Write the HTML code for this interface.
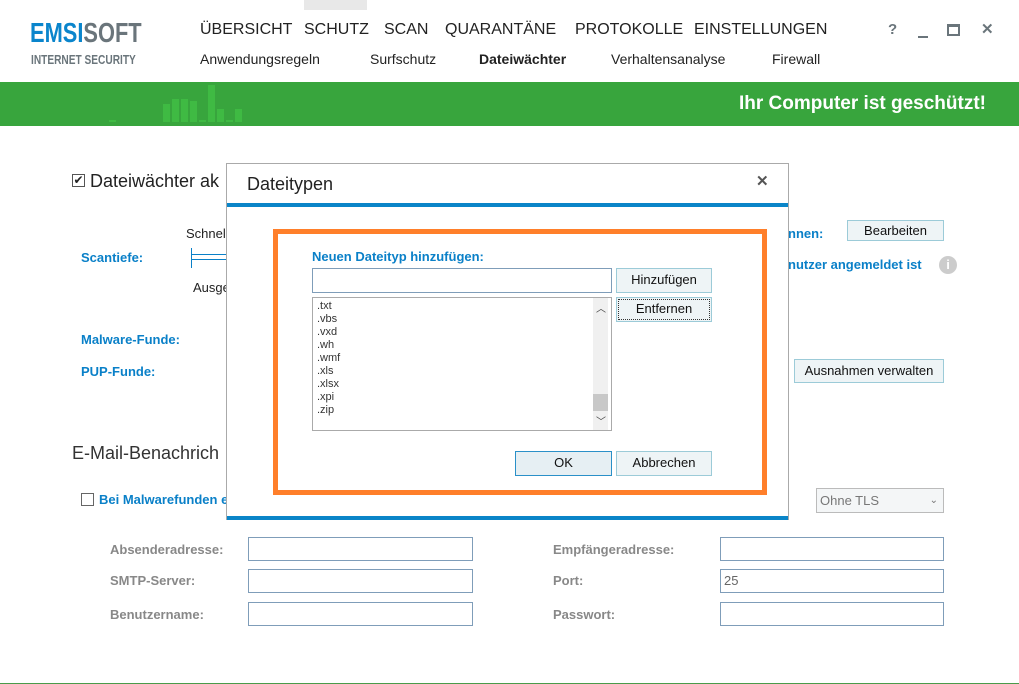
<!DOCTYPE html><html><head><meta charset="utf-8"><style>
*{margin:0;padding:0;box-sizing:border-box}
body{width:1019px;height:684px;position:relative;background:#fff;font-family:"Liberation Sans",sans-serif;color:#222;overflow:hidden}
.a{position:absolute;white-space:nowrap}
.nav{font-size:16px;color:#222;top:21px}
.sub{font-size:14px;color:#222;top:51px}
.blue{color:#0a80c8;font-weight:bold;font-size:13px}
.gray{color:#888;font-weight:bold;font-size:13px}
.in{position:absolute;border:1px solid #7f9db9;background:#fff;height:24px;width:225px}
.btn{position:absolute;border:1px solid #9ccbd8;background:#eef4f6;font-size:13px;text-align:center;line-height:22px;color:#111}
.bar{position:absolute;background:#3fba43;width:7px}
</style></head><body>
<div class="a" style="left:30px;top:17px;font-size:28px;font-weight:bold;color:#6a757b;transform:scaleX(0.78);transform-origin:left"><span style="color:#0a85cc">EMSI</span>SOFT</div>
<div class="a" style="left:31px;top:52px;font-size:13px;font-weight:bold;color:#6a757b;transform:scaleX(0.78);transform-origin:left">INTERNET SECURITY</div>
<div class="a" style="left:304px;top:0;width:63px;height:10px;background:#e8e8e8"></div>
<div class="a nav" style="left:200px">ÜBERSICHT</div>
<div class="a nav" style="left:304px">SCHUTZ</div>
<div class="a nav" style="left:384px">SCAN</div>
<div class="a nav" style="left:445px">QUARANTÄNE</div>
<div class="a nav" style="left:575px">PROTOKOLLE</div>
<div class="a nav" style="left:694px">EINSTELLUNGEN</div>
<div class="a sub" style="left:200px">Anwendungsregeln</div>
<div class="a sub" style="left:370px">Surfschutz</div>
<div class="a sub" style="left:479px;font-weight:bold">Dateiwächter</div>
<div class="a sub" style="left:611px">Verhaltensanalyse</div>
<div class="a sub" style="left:772px">Firewall</div>
<div class="a" style="left:888px;top:21px;font-size:15px;font-weight:bold;color:#6a757b">?</div>
<div class="a" style="left:918px;top:36px;width:10px;height:2px;background:#6a757b"></div>
<div class="a" style="left:947px;top:24px;width:13px;height:12px;border:2px solid #6a757b;border-top-width:3px"></div>
<div class="a" style="left:981px;top:20px;font-size:15px;font-weight:bold;color:#6a757b">✕</div>
<div class="a" style="left:0;top:82px;width:1019px;height:44px;background:#38a53d"></div>
<div class="bar" style="left:109px;top:120px;height:2px"></div>
<div class="bar" style="left:163px;top:104px;height:18px"></div>
<div class="bar" style="left:172px;top:99px;height:23px"></div>
<div class="bar" style="left:181px;top:99px;height:23px"></div>
<div class="bar" style="left:190px;top:101px;height:21px"></div>
<div class="bar" style="left:199px;top:120px;height:2px"></div>
<div class="bar" style="left:208px;top:85px;height:37px"></div>
<div class="bar" style="left:217px;top:109px;height:13px"></div>
<div class="bar" style="left:226px;top:120px;height:2px"></div>
<div class="bar" style="left:235px;top:109px;height:13px"></div>
<div class="a" style="right:33px;top:93px;font-size:19px;font-weight:bold;color:#fff">Ihr Computer ist geschützt!</div>

<div class="a" style="left:72px;top:174px;width:13px;height:13px;border:1px solid #555;font-size:12px;line-height:11px;text-align:center">✔</div>
<div class="a" style="left:90px;top:171px;font-size:18px">Dateiwächter ak</div>
<div class="a" style="left:186px;top:226px;font-size:13px">Schnell</div>
<div class="a blue" style="left:81px;top:250px">Scantiefe:</div>
<div class="a" style="left:191px;top:248px;width:1px;height:20px;background:#0a80c8"></div>
<div class="a" style="left:191px;top:254px;width:40px;height:6px;border-top:1px solid #0a80c8;border-bottom:1px solid #0a80c8"></div>
<div class="a" style="left:193px;top:280px;font-size:13px">Ausge</div>
<div class="a blue" style="left:81px;top:332px">Malware-Funde:</div>
<div class="a blue" style="left:81px;top:364px">PUP-Funde:</div>
<div class="a" style="left:72px;top:443px;font-size:18px;color:#333">E-Mail-Benachrich</div>
<div class="a" style="left:81px;top:493px;width:13px;height:13px;border:1px solid #666"></div>
<div class="a blue" style="left:99px;top:492px">Bei Malwarefunden e</div>

<div class="a blue" style="left:788px;top:226px">nnen:</div>
<div class="btn" style="left:847px;top:220px;width:97px;height:21px;line-height:19px">Bearbeiten</div>
<div class="a blue" style="left:788px;top:257px">nutzer angemeldet ist</div>
<div class="a" style="left:939px;top:256px;width:18px;height:18px;border-radius:50%;background:#ccc;color:#fff;font-weight:bold;font-size:13px;text-align:center;line-height:18px">i</div>
<div class="btn" style="left:794px;top:359px;width:150px;height:24px">Ausnahmen verwalten</div>
<div class="a" style="left:816px;top:488px;width:128px;height:25px;border:1px solid #bbb;background:#f4f6f7;font-size:13px;color:#777;line-height:23px;padding-left:3px">Ohne TLS<span style="position:absolute;right:5px;font-size:10px">⌄</span></div>

<div class="a gray" style="left:110px;top:542px">Absenderadresse:</div>
<div class="a gray" style="left:110px;top:573px">SMTP-Server:</div>
<div class="a gray" style="left:110px;top:607px">Benutzername:</div>
<div class="in" style="left:248px;top:537px"></div>
<div class="in" style="left:248px;top:569px"></div>
<div class="in" style="left:248px;top:602px"></div>
<div class="a gray" style="left:553px;top:542px">Empfängeradresse:</div>
<div class="a gray" style="left:553px;top:573px">Port:</div>
<div class="a gray" style="left:553px;top:607px">Passwort:</div>
<div class="in" style="left:720px;top:537px;width:224px"></div>
<div class="in" style="left:720px;top:569px;width:224px;font-size:13px;color:#666;line-height:22px;padding-left:3px">25</div>
<div class="in" style="left:720px;top:602px;width:224px"></div>
<div class="a" style="left:0;top:683px;width:1019px;height:1px;background:#4a9b4a"></div>

<div class="a" style="left:226px;top:163px;width:563px;height:357px;background:#fff;border:1px solid #aaa"></div>
<div class="a" style="left:247px;top:174px;font-size:18px;color:#222">Dateitypen</div>
<div class="a" style="left:756px;top:172px;font-size:15px;font-weight:bold;color:#555">✕</div>
<div class="a" style="left:227px;top:203px;width:561px;height:4px;background:#0a85c8"></div>
<div class="a" style="left:227px;top:516px;width:561px;height:4px;background:#0a85c8"></div>
<div class="a" style="left:273px;top:229px;width:494px;height:266px;border:5px solid #ff7f2a"></div>
<div class="a blue" style="left:312px;top:249px">Neuen Dateityp hinzufügen:</div>
<div class="a" style="left:312px;top:268px;width:300px;height:25px;border:1px solid #7f9db9"></div>
<div class="btn" style="left:616px;top:268px;width:96px;height:25px">Hinzufügen</div>
<div class="a" style="left:312px;top:297px;width:300px;height:134px;border:1px solid #aaa;font-size:11px;line-height:13px;color:#333;padding:2px 0 0 4px;white-space:pre">.txt
.vbs
.vxd
.wh
.wmf
.xls
.xlsx
.xpi
.zip</div>
<div class="a" style="left:593px;top:298px;width:15px;height:132px;background:#f0f0f0"></div>
<div class="a" style="left:593px;top:394px;width:15px;height:17px;background:#c8c8c8"></div>
<div class="a" style="left:596px;top:300px;font-size:10px;color:#444">︿</div>
<div class="a" style="left:596px;top:413px;font-size:10px;color:#444">﹀</div>
<div class="btn" style="left:616px;top:297px;width:96px;height:25px;outline:1px dotted #333;outline-offset:-3px">Entfernen</div>
<div class="btn" style="left:515px;top:451px;width:97px;height:25px;border-color:#2a90c8;background:#e6eff3">OK</div>
<div class="btn" style="left:616px;top:451px;width:96px;height:25px">Abbrechen</div>
</body></html>
